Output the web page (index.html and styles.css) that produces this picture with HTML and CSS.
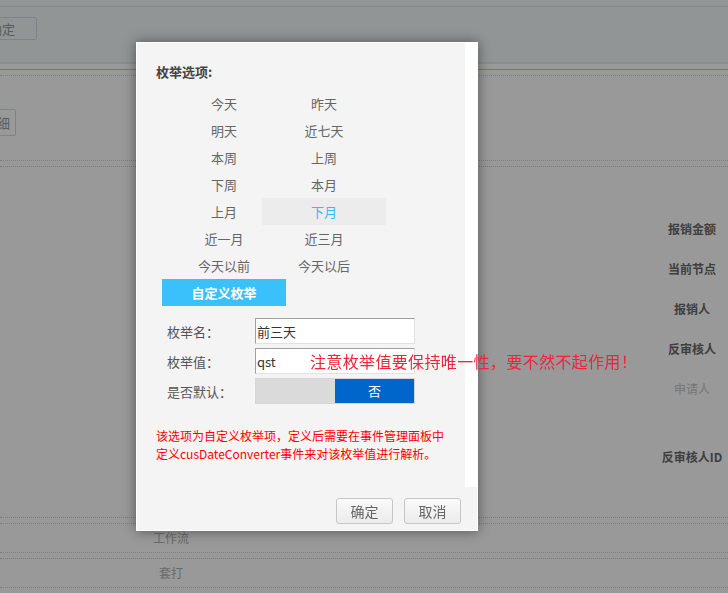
FILE: index.html
```html
<!DOCTYPE html>
<html lang="zh-CN">
<head>
<meta charset="utf-8">
<title>枚举选项</title>
<link rel="stylesheet" href="styles.css">
</head>
<body>
<div class="page">
  <div class="toolbar">
    <div class="toolbar-inner">
      <button class="ghost-btn ok-btn">确定</button>
    </div>
  </div>
  <div class="tabs"><div class="gold-rule"></div></div>
  <div class="detail-row"><button class="ghost-btn detail-btn">明细</button></div>
  <div class="sep"></div>
  <div class="fields">
    <div class="field">报销金额</div>
    <div class="field">当前节点</div>
    <div class="field">报销人</div>
    <div class="field">反审核人</div>
    <div class="field field-muted">申请人</div>
    <div class="field field-last">反审核人ID</div>
  </div>
  <ul class="list">
    <li class="list-first"><span class="cell">流程</span></li>
    <li><span class="cell">工作流</span></li>
    <li><span class="cell">套打</span></li>
  </ul>
</div>

<div class="mask"></div>

<div class="dialog">
  <div class="dialog-body">
    <div class="dialog-content">
      <h3 class="title">枚举选项:</h3>
      <div class="enum-grid">
        <div class="enum-item">今天</div>
        <div class="enum-item">昨天</div>
        <div class="enum-item">明天</div>
        <div class="enum-item">近七天</div>
        <div class="enum-item">本周</div>
        <div class="enum-item">上周</div>
        <div class="enum-item">下周</div>
        <div class="enum-item">本月</div>
        <div class="enum-item">上月</div>
        <div class="enum-item enum-hover">下月</div>
        <div class="enum-item">近一月</div>
        <div class="enum-item">近三月</div>
        <div class="enum-item">今天以前</div>
        <div class="enum-item">今天以后</div>
        <div class="enum-item enum-custom">自定义枚举</div>
      </div>
      <div class="form">
        <div class="form-row">
          <label class="form-label">枚举名：</label>
          <input class="form-input" type="text" value="前三天">
        </div>
        <div class="form-row">
          <label class="form-label">枚举值：</label>
          <input class="form-input" type="text" value="qst">
          <span class="warn">注意枚举值要保持唯一性，要不然不起作用！</span>
        </div>
        <div class="form-row">
          <label class="form-label">是否默认：</label>
          <div class="toggle">
            <span class="toggle-off"></span>
            <span class="toggle-on">否</span>
          </div>
        </div>
      </div>
      <p class="help">该选项为自定义枚举项，定义后需要在事件管理面板中定义cusDateConverter事件来对该枚举值进行解析。</p>
    </div>
  </div>
  <div class="dialog-footer">
    <button class="foot-btn">确定</button>
    <button class="foot-btn">取消</button>
  </div>
</div>
</body>
</html>
```

FILE: styles.css
```css
* { box-sizing: border-box; }

html, body {
  margin: 0;
  padding: 0;
  height: 100%;
  overflow: hidden;
}

body {
  background: #ffffff;
  font-family: "Noto Sans CJK SC", "Noto Sans", sans-serif;
  font-size: 13px;
  color: #666;
}

.page {
  width: 728px;
}

/* top toolbar */
.toolbar {
  height: 62px;
  padding-top: 6px;
  background: #f2f8f8;
}
.toolbar-inner {
  border-top: 1px solid #dde4e4;
  padding-top: 10px;
}
.ghost-btn {
  display: block;
  font-family: inherit;
  font-size: 13px;
  color: #999;
  background: transparent;
  border: 1px solid #d2dae0;
  border-radius: 2px;
  padding: 0;
  line-height: 21px;
}
.ok-btn {
  height: 23px;
  margin-left: -33px;
  padding: 0 21px;
  background: #f2f8f8;
}
.tabs {
  border-top: 2px solid #e4ecf2;
  padding-top: 5px;
}
.gold-rule {
  border-top: 1px solid #f2c255;
  border-bottom: 1px dotted #cfcfcf;
  height: 7px;
}
.detail-row {
  padding-top: 33px;
}
.detail-btn {
  height: 27px;
  margin-left: -22px;
  padding: 0 5px;
  line-height: 25px;
}
.sep {
  margin-top: 24px;
  height: 7px;
  border-top: 1px dotted #cfcfcf;
  border-bottom: 1px dotted #cfcfcf;
}

/* right field labels */
.fields {
  margin-top: 42px;
  display: flex;
  flex-direction: column;
  align-items: flex-end;
}
.field {
  width: 72px;
  line-height: 40px;
  height: 40px;
  text-align: center;
  font-size: 12px;
  font-weight: bold;
  color: #6a6a6a;
}
.field-muted {
  font-weight: normal;
  color: #c4c4c4;
}
.field-last {
  margin-top: 28px;
}

/* bottom list */
.list {
  list-style: none;
  margin: 11px 0 0;
  padding: 0;
}
.list li {
  height: 30px;
  border-top: 1px dotted #cfcfcf;
  border-bottom: 1px dotted #cfcfcf;
  margin-bottom: 5px;
  line-height: 28px;
  font-size: 12px;
  color: #b0b0b0;
}
.list .list-first {
  border-top-color: transparent;
}
.cell {
  display: inline-block;
  width: 70px;
  margin-left: 136px;
  text-align: center;
}

/* overlay */
.mask {
  position: fixed;
  inset: 0;
  background: rgba(0, 0, 0, 0.4);
}

/* dialog */
.dialog {
  position: absolute;
  left: 136px;
  top: 42px;
  width: 342px;
  height: 489px;
  border: 1px solid #ffffff;
  background: #f4f4f4;
  box-shadow: 0 0 12px rgba(0, 0, 0, 0.45);
  display: flex;
  flex-direction: column;
}
.dialog-body {
  height: 444px;
  background: #ffffff;
  display: flex;
}
.dialog-content {
  position: relative;
  width: 328px;
  background: #f4f4f4;
  padding: 19px 19px 0;
}
.title {
  margin: 0;
  font-size: 13px;
  line-height: 20px;
  font-weight: bold;
  color: #444;
}
.enum-grid {
  margin: 8px 0 0 18px;
  display: grid;
  grid-template-columns: 100px 100px;
  grid-auto-rows: 27px;
}
.enum-item {
  margin: 0 -12px;
  line-height: 27px;
  text-align: center;
  font-size: 13px;
  color: #666;
}
.enum-hover {
  background: #ececec;
  color: #36bbf8;
}
.enum-custom {
  background: #3ac1fc;
  color: #ffffff;
  font-weight: bold;
}

.form {
  margin: 12px 0 0 11px;
  display: flex;
  flex-direction: column;
  gap: 4px;
}
.form-row {
  position: relative;
  display: flex;
  align-items: center;
  height: 26px;
}
.form-label {
  width: 88px;
  font-size: 13px;
  color: #555;
}
.form-input {
  width: 160px;
  height: 26px;
  padding: 0 0 0 1px;
  border: 1px solid;
  border-color: #a0a0a0 #e2e2e2 #e2e2e2 #a0a0a0;
  background: #ffffff;
  font-family: inherit;
  font-size: 13px;
  color: #333;
  outline: none;
}
.warn {
  position: absolute;
  left: 143px;
  top: 0;
  line-height: 26px;
  font-size: 16px;
  letter-spacing: 0.35px;
  color: #f0233a;
  white-space: nowrap;
}
.toggle {
  width: 160px;
  height: 26px;
  display: flex;
  border: 1px solid #d6d6d6;
}
.toggle-off {
  flex: 1;
  background: #dadada;
}
.toggle-on {
  flex: 1;
  background: #0066cc;
  color: #ffffff;
  text-align: center;
  line-height: 24px;
  font-size: 13px;
}
.help {
  margin: 23px 0 0;
  font-size: 12px;
  line-height: 18px;
  color: #ff0000;
}

.dialog-footer {
  height: 43px;
  display: flex;
  justify-content: flex-end;
  align-items: flex-start;
  gap: 11px;
  padding: 11px 16px 0 0;
}
.foot-btn {
  width: 57px;
  height: 26px;
  padding: 0;
  border: 1px solid #c6c6c6;
  border-radius: 3px;
  background: linear-gradient(#fafafa, #ebebeb);
  font-family: inherit;
  font-size: 14px;
  color: #666;
  line-height: 24px;
}
```
